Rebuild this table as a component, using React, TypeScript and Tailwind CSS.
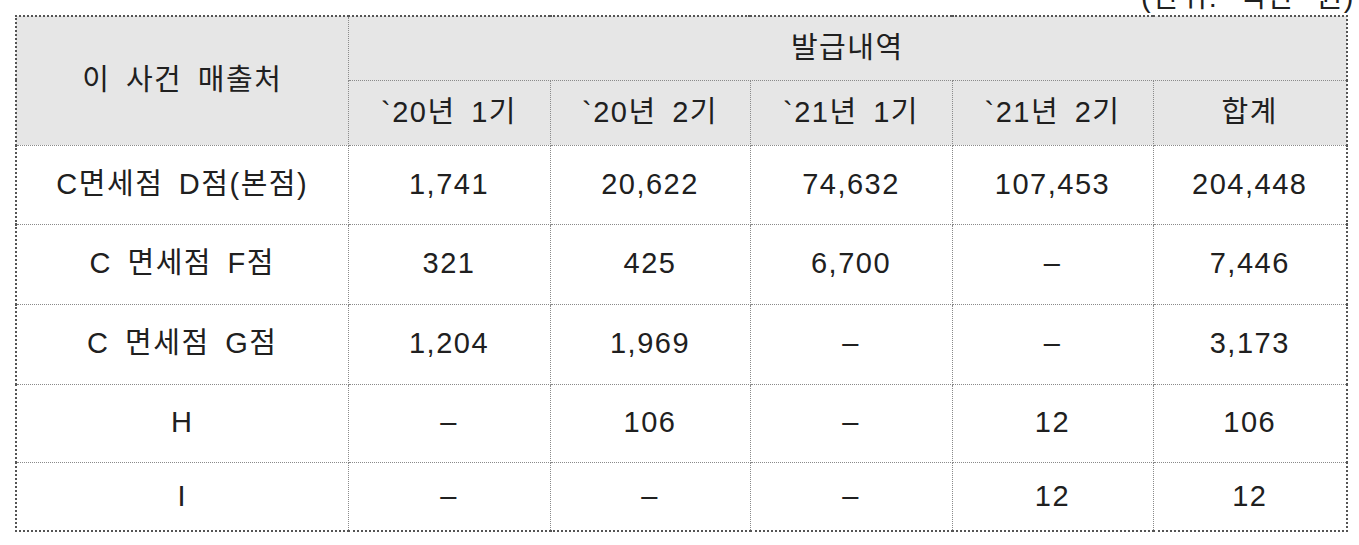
const cols = [332, 202, 200, 202, 201, 194];

const periods = ['`20년 1기', '`20년 2기', '`21년 1기', '`21년 2기', '합계'];

const rows = [
  { name: 'C면세점 D점(본점)', values: ['1,741', '20,622', '74,632', '107,453', '204,448'], h: 'h-[79px]' },
  { name: 'C 면세점 F점', values: ['321', '425', '6,700', '-', '7,446'], h: 'h-[80px]' },
  { name: 'C 면세점 G점', values: ['1,204', '1,969', '-', '-', '3,173'], h: 'h-[80px]' },
  { name: 'H', values: ['-', '106', '-', '12', '106'], h: 'h-[78px]' },
  { name: 'I', values: ['-', '-', '-', '12', '12'], h: 'h-[69px]' },
];

const cell = 'border border-dotted border-[#8a8a8a] text-center align-middle p-0';

const App = () => {
  return (
    <div
      className="w-[1359px] h-[545px] bg-white text-[#202020] overflow-hidden text-[29px] tracking-[1.5px] [word-spacing:6px]"
      style={{ fontFamily: '"Liberation Sans", "Noto Sans CJK KR", sans-serif' }}
    >
      {/* unit caption, cut off by the page top */}
      <div className="flex h-[15px] items-start justify-end pr-[4px]">
        <div className="-mt-[17px] leading-none whitespace-pre [word-spacing:11px]">(단위: 백만 원)</div>
      </div>

      <table className="ml-[15px] w-[1331px] table-fixed border-collapse border-2 border-dotted border-[#555]">
        <colgroup>
          {cols.map((w, i) => (
            <col key={i} style={{ width: w }} />
          ))}
        </colgroup>
        <thead className="bg-[#e6e6e6]">
          <tr className="h-[64px]">
            <th rowSpan={2} className={`${cell} font-normal`}>
              이 사건 매출처
            </th>
            <th colSpan={5} className={`${cell} font-normal`}>
              발급내역
            </th>
          </tr>
          <tr className="h-[65px]">
            {periods.map((p) => (
              <th key={p} className={`${cell} font-normal`}>
                {p}
              </th>
            ))}
          </tr>
        </thead>
        <tbody>
          {rows.map((r) => (
            <tr key={r.name} className={r.h}>
              <td className={cell}>{r.name}</td>
              {r.values.map((v, i) => (
                <td key={i} className={cell}>
                  {v === '-' ? '–' : v}
                </td>
              ))}
            </tr>
          ))}
        </tbody>
      </table>
    </div>
  );
};

export default App;
